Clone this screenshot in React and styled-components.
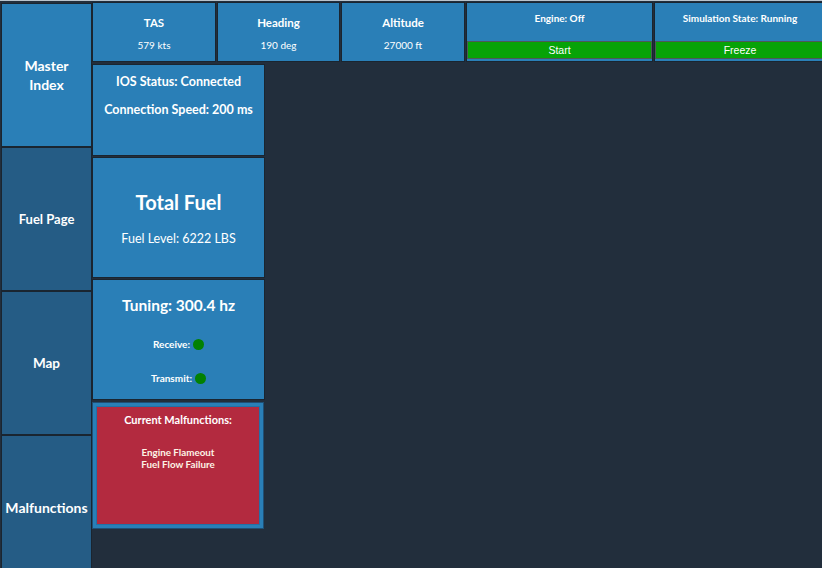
import React from "react";
import styled, { createGlobalStyle } from "styled-components";

const Global = createGlobalStyle`
  html, body { margin: 0; padding: 0; background: #222e3c; }
  body { font-family: Lato, "Open Sans", sans-serif; color: #fff; overflow: hidden; }
  * { box-sizing: border-box; }
`;

const Page = styled.div`
  width: 822px;
  height: 568px;
  border-top: 1px solid #b9c3cc;
  display: grid;
  grid-template-columns: 92px 1fr;
  overflow: hidden;
  background: #222e3c;
`;

const Sidebar = styled.nav`
  display: flex;
  flex-direction: column;
  padding-left: 1px;
  padding-top: 2px;
`;

const NavButton = styled.div`
  flex: 0 0 144px;
  height: 144px;
  border: 1px solid #1a2530;
  background: ${(p) => (p.$active ? "#2a7fb7" : "#255c85")};
  display: flex;
  align-items: center;
  justify-content: center;
  text-align: center;
  font-weight: 700;
  font-size: ${(p) => p.$size || 14}px;
  line-height: 19px;
  white-space: ${(p) => (p.$nowrap ? "nowrap" : "normal")};
  padding: 0 ${(p) => (p.$nowrap ? 0 : 14)}px;
`;

const Main = styled.div`
  display: flex;
  flex-direction: column;
  padding-top: 1px;
`;

const TopBar = styled.div`
  display: flex;
  gap: 1px;
`;

const Stat = styled.div`
  width: ${(p) => p.$w}px;
  flex: 0 0 auto;
  height: 60px;
  border: 1px solid #1a2530;
  background: #2a7fb7;
  display: flex;
  flex-direction: column;
  align-items: center;
  padding-top: 13px;
`;

const StatLabel = styled.div`
  font-weight: 700;
  font-size: 11.5px;
  line-height: 14px;
`;

const StatValue = styled.div`
  font-size: 10px;
  line-height: 12px;
  margin-top: 9px;
`;

const Control = styled.div`
  width: ${(p) => p.$w}px;
  flex: 0 0 auto;
  height: 60px;
  border: 1px solid #1a2530;
  background: #2a7fb7;
  display: flex;
  flex-direction: column;
  align-items: stretch;
`;

const ControlLabel = styled.div`
  font-weight: 700;
  font-size: 10px;
  line-height: 12px;
  text-align: center;
  padding-top: 9px;
  height: 38px;
`;

const GreenButton = styled.button`
  height: 18px;
  margin: 0;
  border: 1px solid #4d5a55;
  background: #07a307;
  color: #fff;
  font-family: "Liberation Sans", Arial, sans-serif;
  font-size: 10.5px;
  line-height: 14px;
  padding: 0;
`;

const Cards = styled.div`
  display: flex;
  flex-direction: column;
  width: 173px;
  margin-top: 2px;
  gap: 1px;
`;

const Card = styled.div`
  height: ${(p) => p.$h}px;
  border: 1px solid #1a2530;
  background: #2a7fb7;
  display: flex;
  flex-direction: column;
  align-items: center;
  padding-top: ${(p) => p.$pt || 0}px;
`;

const BoldLine = styled.div`
  font-weight: 700;
  font-size: ${(p) => p.$size}px;
  line-height: ${(p) => p.$lh || p.$size + 4}px;
  margin-top: ${(p) => p.$mt || 0}px;
`;

const PlainLine = styled.div`
  font-size: ${(p) => p.$size}px;
  line-height: ${(p) => p.$size + 4}px;
  margin-top: ${(p) => p.$mt || 0}px;
`;

const Indicator = styled.div`
  display: flex;
  align-items: center;
  gap: 3px;
  font-weight: 700;
  font-size: 10px;
  line-height: 12px;
  margin-top: ${(p) => p.$mt}px;
`;

const Dot = styled.span`
  width: 11px;
  height: 11px;
  border-radius: 50%;
  background: #028102;
  display: inline-block;
`;

const MalfFrame = styled.div`
  height: 127px;
  border: 1px solid #1f4f75;
  background: #2a7fb7;
  padding: 3px;
  margin-top: 1px;
  width: 172px;
`;

const MalfInner = styled.div`
  height: 100%;
  background: #b32a3f;
  border: 1px solid #2470a6;
  display: flex;
  flex-direction: column;
  align-items: center;
  padding-top: 6px;
`;

const MalfItem = styled.div`
  font-weight: 700;
  font-size: 9.8px;
  line-height: 12px;
  color: #fdf3e6;
  margin-top: ${(p) => p.$mt || 0}px;
`;

export default function App() {
  return (
    <>
      <Global />
      <Page>
        <Sidebar>
          <NavButton $active>Master Index</NavButton>
          <NavButton $size={13}>Fuel Page</NavButton>
          <NavButton $size={13.5}>Map</NavButton>
          <NavButton $nowrap>Malfunctions</NavButton>
        </Sidebar>
        <Main>
          <TopBar>
            <Stat $w={124}>
              <StatLabel>TAS</StatLabel>
              <StatValue>579 kts</StatValue>
            </Stat>
            <Stat $w={123}>
              <StatLabel>Heading</StatLabel>
              <StatValue>190 deg</StatValue>
            </Stat>
            <Stat $w={124}>
              <StatLabel>Altitude</StatLabel>
              <StatValue>27000 ft</StatValue>
            </Stat>
            <Control $w={187}>
              <ControlLabel>Engine: Off</ControlLabel>
              <GreenButton>Start</GreenButton>
            </Control>
            <Control $w={172}>
              <ControlLabel>Simulation State: Running</ControlLabel>
              <GreenButton>Freeze</GreenButton>
            </Control>
          </TopBar>
          <Cards>
            <Card $h={92} $pt={9}>
              <BoldLine $size={12.5} $lh={16}>IOS Status: Connected</BoldLine>
              <BoldLine $size={12.5} $lh={16} $mt={12}>Connection Speed: 200 ms</BoldLine>
            </Card>
            <Card $h={121} $pt={32}>
              <BoldLine $size={20} $lh={24}>Total Fuel</BoldLine>
              <PlainLine $size={12.5} $mt={17}>Fuel Level: 6222 LBS</PlainLine>
            </Card>
            <Card $h={121} $pt={15}>
              <BoldLine $size={15.5} $lh={20}>Tuning: 300.4 hz</BoldLine>
              <Indicator $mt={23}>Receive: <Dot /></Indicator>
              <Indicator $mt={22}>Transmit: <Dot /></Indicator>
            </Card>
            <MalfFrame>
              <MalfInner>
                <BoldLine $size={11} $lh={14}>Current Malfunctions:</BoldLine>
                <MalfItem $mt={19}>Engine Flameout</MalfItem>
                <MalfItem>Fuel Flow Failure</MalfItem>
              </MalfInner>
            </MalfFrame>
          </Cards>
        </Main>
      </Page>
    </>
  );
}
